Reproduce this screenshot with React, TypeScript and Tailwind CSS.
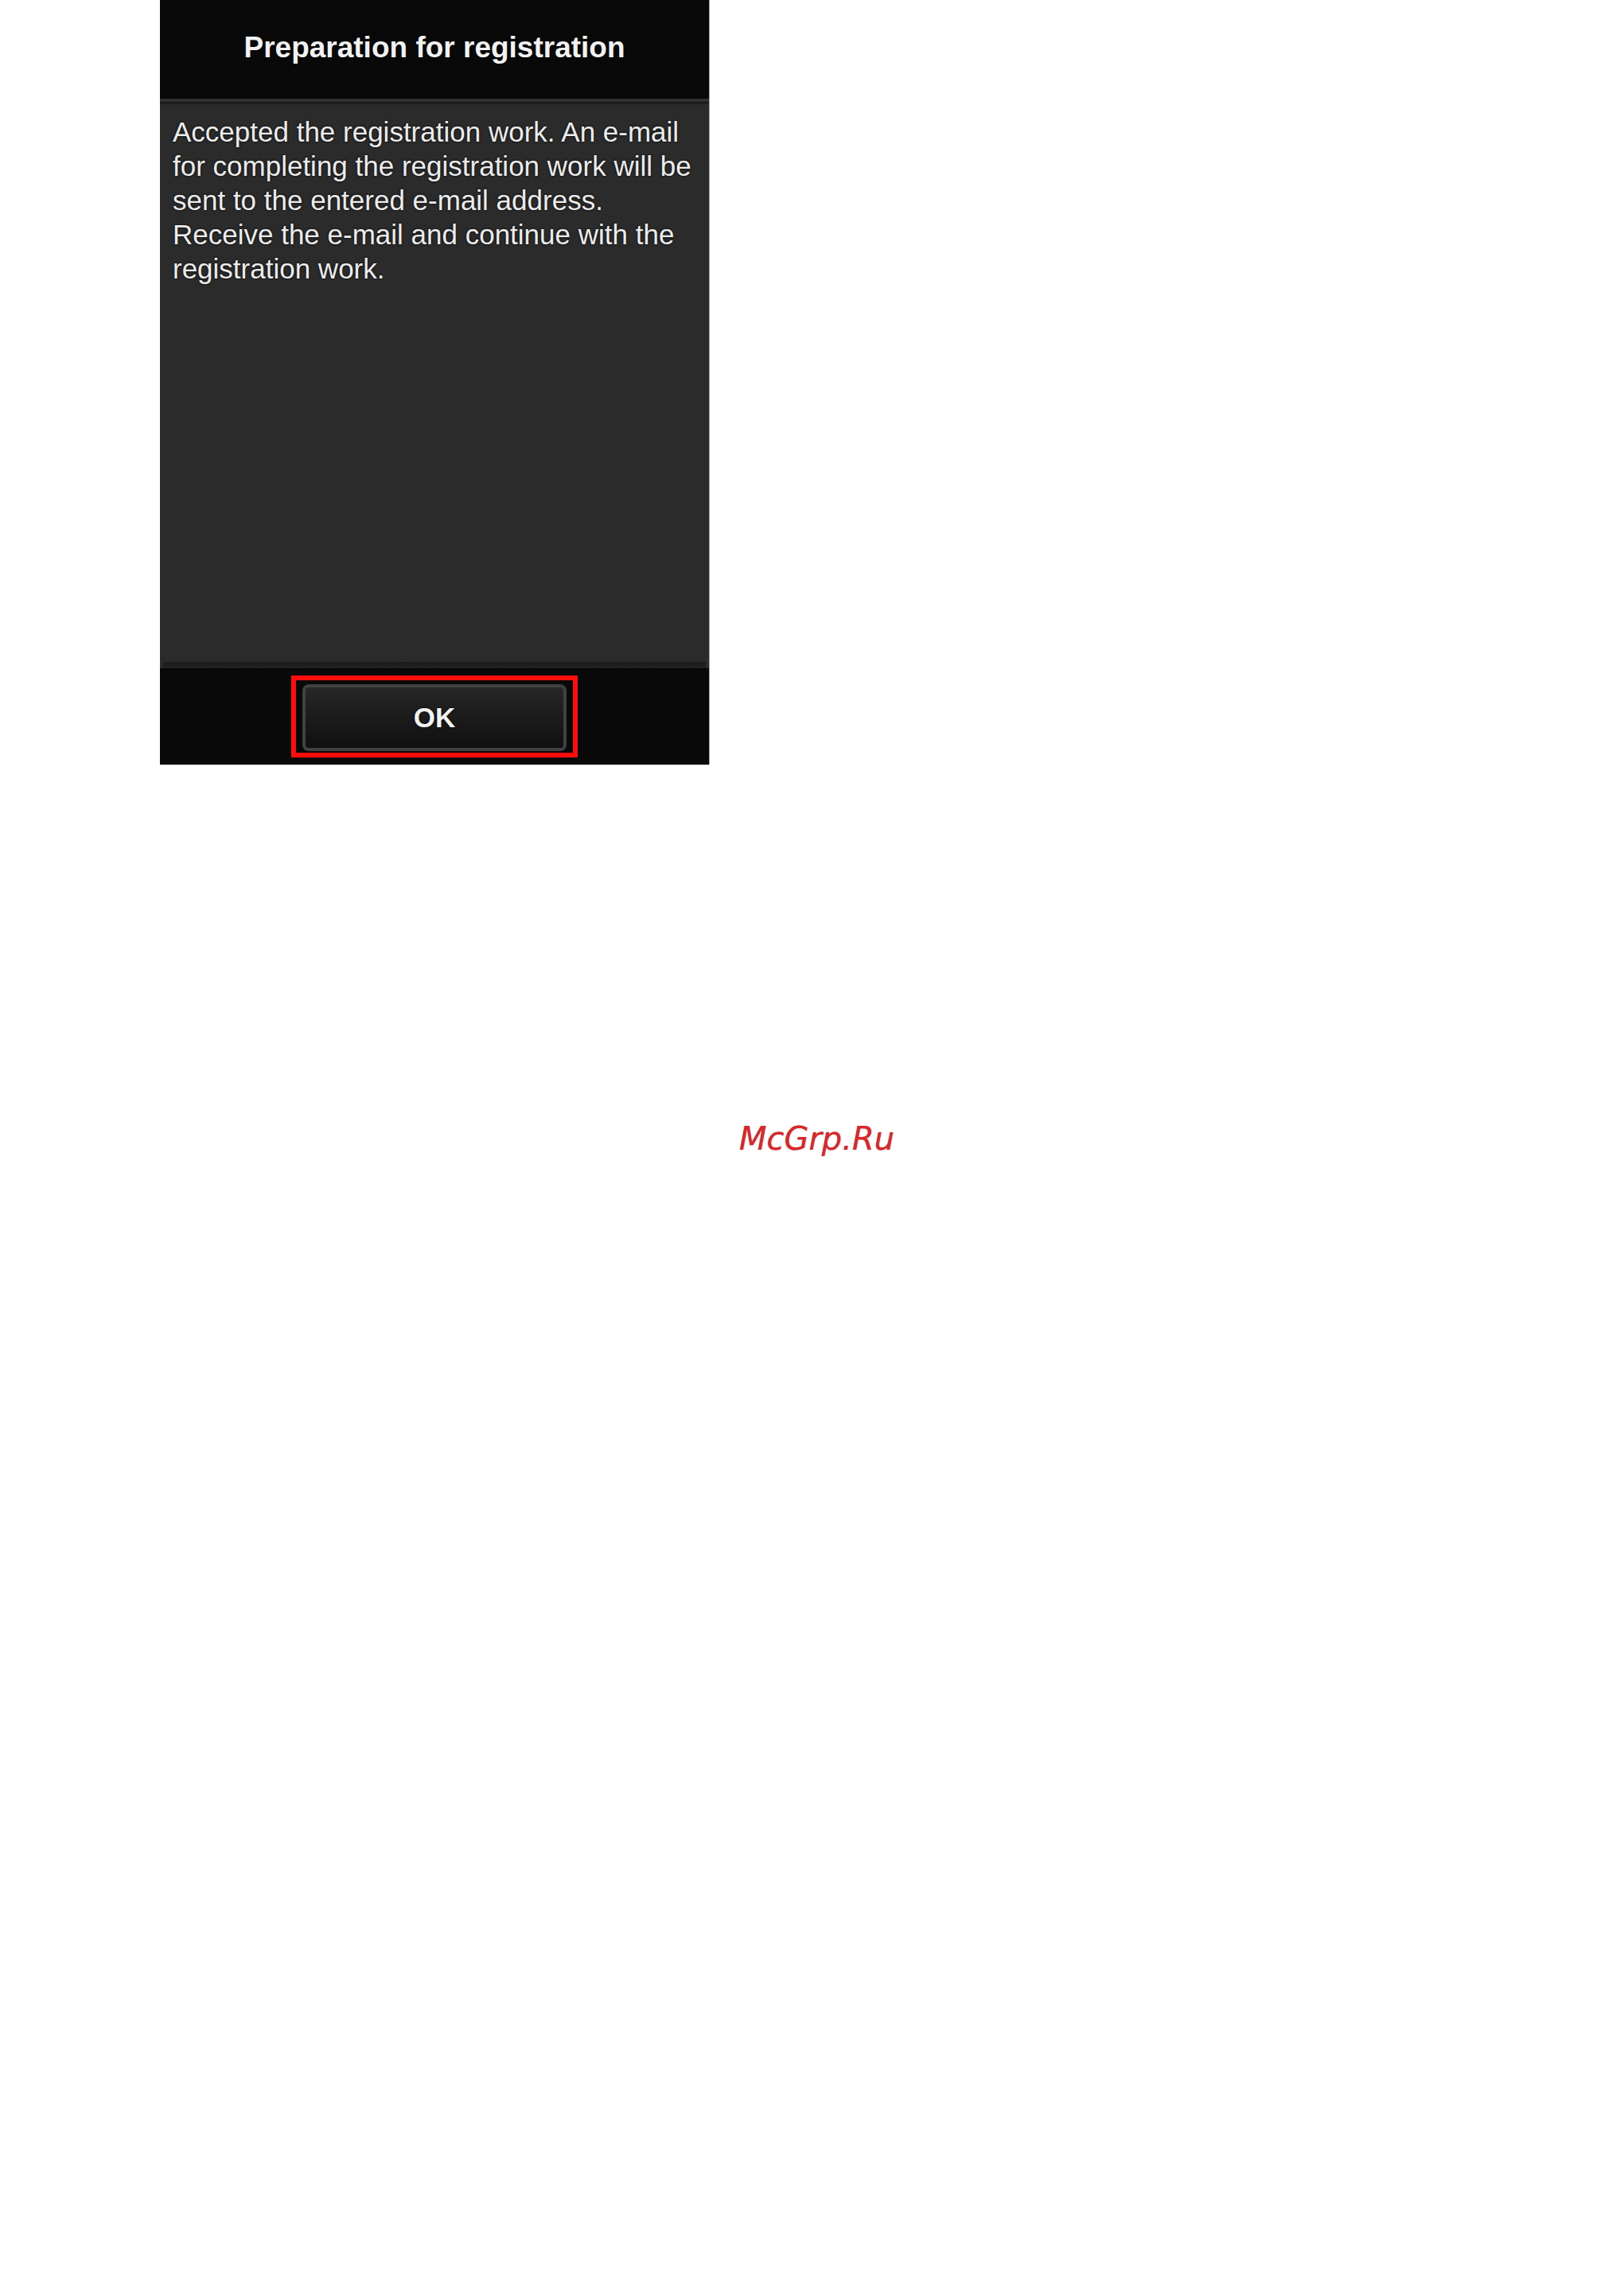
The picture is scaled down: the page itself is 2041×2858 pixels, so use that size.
export default function App() {
  return (
    <div className="min-h-screen bg-white font-['Liberation_Sans',Arial,sans-serif]">

      {/* Dialog */}

      <main className="ml-[201px] flex max-w-[691px] flex-col border-r border-[#a0a0a0] bg-[#2b2b2b] text-[#ececec]">

        <header className="border-b-4 border-[#303030] bg-[#090909] px-4 pt-10 pb-11">
          <h1 className="text-center text-[37px] leading-10 font-bold text-[#f2f2f2] [text-shadow:0_0_3px_#000]">
            Preparation for registration
          </h1>
        </header>

        <div className="h-1 bg-linear-to-b from-[#151515] to-[#2b2b2b]" />

        <p className="min-h-[700px] px-4 pt-3 text-[35px] leading-[43px] [text-shadow:0_0_3px_#000]">
          Accepted the registration work. An e-mail for completing the
          registration work will be sent to the entered e-mail address.
          <br />
          Receive the e-mail and continue with the registration work.
        </p>

        <div className="mx-1 h-2 bg-linear-to-b from-[#1a1a1a] to-[#232323]" />

        <footer className="flex justify-center border-t border-black bg-[#090909] pt-2 pb-[9px]">
          <div className="border-[6px] border-[#ff0d0d] px-2 pt-[5px] pb-[2px]">
            <button
              type="button"
              className="h-[84px] w-[332px] rounded-lg border-4 border-[#414141] bg-linear-to-b from-[#272727] to-[#101010] text-[35px] font-bold text-[#f2f2f2] [text-shadow:0_0_3px_#000]"
            >
              OK
            </button>
          </div>
        </footer>

      </main>

      {/* Site link */}

      <div className="mt-[446px] pl-3 text-center">
        <a
          href="#"
          className="font-['DejaVu_Sans',sans-serif] text-[40px] leading-[48px] text-[#df2528] italic [text-shadow:0_0_1px_#0008]"
        >
          McGrp.Ru
        </a>
      </div>

    </div>
  );
}
